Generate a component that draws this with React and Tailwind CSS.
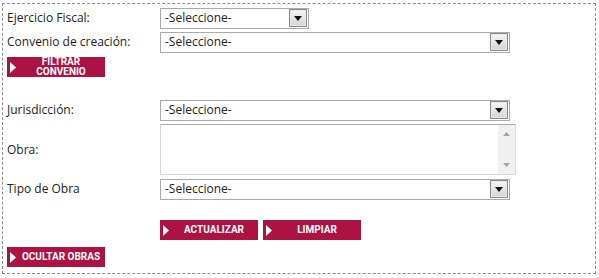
const font = { fontFamily: '"Segoe UI", "Open Sans", "Noto Sans", sans-serif' };
const btnFont = { fontFamily: 'Roboto, "Open Sans", sans-serif' };

const Arrow = () => (
  <div className="flex h-[18px] w-[18px] items-center justify-center border border-[#8a8a8a] bg-gradient-to-b from-[#f6f6f6] to-[#d4d4d4] shadow-[inset_0_0_0_1px_#e8e8e8]">
    <svg width="8" height="5" viewBox="0 0 8 5">
      <path d="M0 0h8L4 5z" fill="#111" />
    </svg>
  </div>
);

const Select = ({ width = "w-[350px]" }) => (
  <div
    className={`flex h-[21px] ${width} items-center justify-between border border-[#a9a9a9] bg-white pl-[4px] pr-[1px] text-[12px] text-[#222]`}
  >
    <span>-Seleccione-</span>
    <Arrow />
  </div>
);

const Btn = ({ children, w = "w-[98px]", two }) => (
  <button
    className={`flex ${w} h-[20px] items-center bg-[#ad1244] pl-[3px] text-white`}
    style={btnFont}
  >
    <svg width="7" height="11" viewBox="0 0 7 11" className="shrink-0">
      <path d="M0 0l6 5.5L0 11z" fill="#fff" />
    </svg>
    <span
      className={`flex-1 text-center text-[10px] font-bold uppercase ${
        two ? "leading-[10px]" : "leading-none"
      }`}
    >
      {children}
    </span>
  </button>
);

const Row = ({ label, children, h = "h-[20px]" }) => (
  <div className={`flex ${h} items-center`}>
    <div className="w-[153px] text-[12px] text-[#222]">{label}</div>
    {children}
  </div>
);

export default function App() {
  return (
    <div className="h-[278px] w-[599px] bg-white pl-[2px] pt-[3px]" style={font}>
      <div className="flex h-[271px] w-[594px] flex-col border border-dashed border-[#8c8c8c] pl-[4px] pt-[4px]">
        <Row label="Ejercicio Fiscal:">
          <Select width="w-[149px]" />
        </Row>
        <div className="mt-[3px]">
          <Row label="Convenio de creación:" h="h-[22px]">
            <Select />
          </Row>
        </div>
        <div className="mt-[4px]">
          <Btn two>
            Filtrar
            <br />
            Convenio
          </Btn>
        </div>
        <div className="mt-[23px]">
          <Row label="Jurisdicción:">
            <Select />
          </Row>
        </div>
        <div className="mt-[4px]">
          <Row label="Obra:" h="h-[51px]">
            <div className="flex h-[51px] w-[356px] border border-[#d8d8d8] border-t-[#a9a9a9] bg-white">
              <div className="flex-1" />
              <div className="flex w-[17px] flex-col items-center justify-between bg-[#f0f0f0] pb-[7px] pt-[7px]">
                <svg width="7" height="4" viewBox="0 0 7 4">
                  <path d="M0 4L3.5 0L7 4z" fill="#a6a6a6" />
                </svg>
                <svg width="7" height="4" viewBox="0 0 7 4">
                  <path d="M0 0h7L3.5 4z" fill="#a6a6a6" />
                </svg>
              </div>
            </div>
          </Row>
        </div>
        <div className="mt-[4px]">
          <Row label="Tipo de Obra">
            <Select />
          </Row>
        </div>
        <div className="ml-[153px] mt-[21px] flex gap-[5px]">
          <Btn>Actualizar</Btn>
          <Btn>Limpiar</Btn>
        </div>
        <div className="mt-[7px]">
          <Btn>Ocultar obras</Btn>
        </div>
      </div>
    </div>
  );
}
